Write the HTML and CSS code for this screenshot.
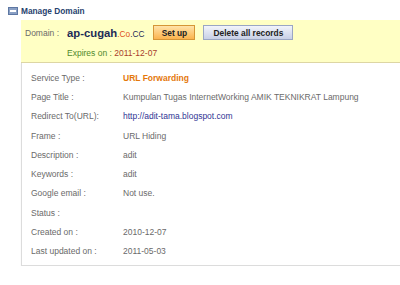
FILE: index.html
```html
<!DOCTYPE html>
<html lang="en">
<head>
    <meta charset="UTF-8">
    <title>Manage Domain</title>
    <link rel="stylesheet" href="styles.css">
</head>
<body>

    <div class="heading">
        <svg class="heading-icon" width="10" height="8" viewBox="0 0 10 8">
            <rect x="0.5" y="0.5" width="9" height="7" fill="#8aa0c4" stroke="#5d77a3"/>
            <rect x="2" y="3" width="6" height="2" fill="#ffffff"/>
        </svg>
        <span>Manage Domain</span>
    </div>

    <div class="domain-box">
        <div class="domain-line">
            <span class="domain-label">Domain :</span>
            <span class="domain-name">ap-cugah</span><span class="domain-ext"><span class="co">.Co</span>.CC</span>
            <button class="btn btn-setup">Set up</button>
            <button class="btn btn-delete">Delete all records</button>
        </div>
        <div class="expires">
            <span class="expires-label">Expires on :</span> <span class="expires-date">2011-12-07</span>
        </div>
    </div>

    <div class="details">
        <div class="row"><span class="label">Service Type :</span><span class="value service">URL Forwarding</span></div>
        <div class="row"><span class="label">Page Title :</span><span class="value">Kumpulan Tugas InternetWorking AMIK TEKNIKRAT Lampung</span></div>
        <div class="row"><span class="label">Redirect To(URL):</span><a class="value link" href="#">http://adit-tama.blogspot.com</a></div>
        <div class="row"><span class="label">Frame :</span><span class="value">URL Hiding</span></div>
        <div class="row"><span class="label">Description :</span><span class="value">adit</span></div>
        <div class="row"><span class="label">Keywords :</span><span class="value">adit</span></div>
        <div class="row"><span class="label">Google email :</span><span class="value">Not use.</span></div>
        <div class="row"><span class="label">Status :</span><span class="value"></span></div>
        <div class="row"><span class="label">Created on :</span><span class="value">2010-12-07</span></div>
        <div class="row"><span class="label">Last updated on :</span><span class="value">2011-05-03</span></div>
    </div>

</body>
</html>
```

FILE: styles.css
```css
* {
    margin: 0;
    padding: 0;
    box-sizing: border-box;
}

body {
    font-family: 'Liberation Sans', Arial, sans-serif;
    font-size: 8.5px;
    color: #6a6a6a;
    background: #fff;
    overflow: hidden;
}

.heading {
    display: flex;
    align-items: center;
    height: 20px;
    padding: 1px 0 0 8px;
    font-size: 8.3px;
    font-weight: bold;
    color: #27426e;
}

.heading-icon {
    margin-right: 3px;
}

.domain-box {
    margin-left: 21px;
    height: 43px;
    background: #ffffc4;
    border-bottom: 1px solid #ddd6a4;
    padding: 4px 0 0 4px;
}

.domain-line {
    display: flex;
    align-items: center;
    height: 17px;
}

.domain-label {
    width: 42px;
}

.domain-name {
    font-size: 11.3px;
    font-weight: bold;
    color: #1d2b57;
}

.domain-ext {
    font-size: 8.3px;
    color: #1d2b57;
    margin-top: 2px;
}

.domain-ext .co {
    color: #e0501a;
}

.btn {
    font-family: 'Liberation Sans', Arial, sans-serif;
    font-size: 8.4px;
    font-weight: bold;
    color: #222;
    height: 15px;
    cursor: pointer;
}

.btn-setup {
    width: 42px;
    margin-left: 9px;
    background: linear-gradient(to bottom, #ffe3a8, #fbb44e);
    border: 1px solid #d59636;
}

.btn-delete {
    width: 90px;
    margin-left: 8px;
    background: linear-gradient(to bottom, #f2f4fb, #c8d0e6);
    border: 1px solid #9aa6c4;
}

.expires {
    margin: 7px 0 0 42px;
}

.expires-label {
    color: #4f8a2c;
}

.expires-date {
    color: #a8402c;
}

.details {
    margin-left: 21px;
    height: 203px;
    border: 1px solid #dcdcdc;
    border-right: none;
    border-top: none;
    box-shadow: 0 1px 1px #eee;
    padding: 5px 0 0 9px;
}

.row {
    display: flex;
    align-items: center;
    height: 19.3px;
}

.label {
    width: 92px;
    flex-shrink: 0;
}

.service {
    font-weight: bold;
    color: #e4780c;
}

.link {
    color: #2f3594;
    text-decoration: none;
}
```
